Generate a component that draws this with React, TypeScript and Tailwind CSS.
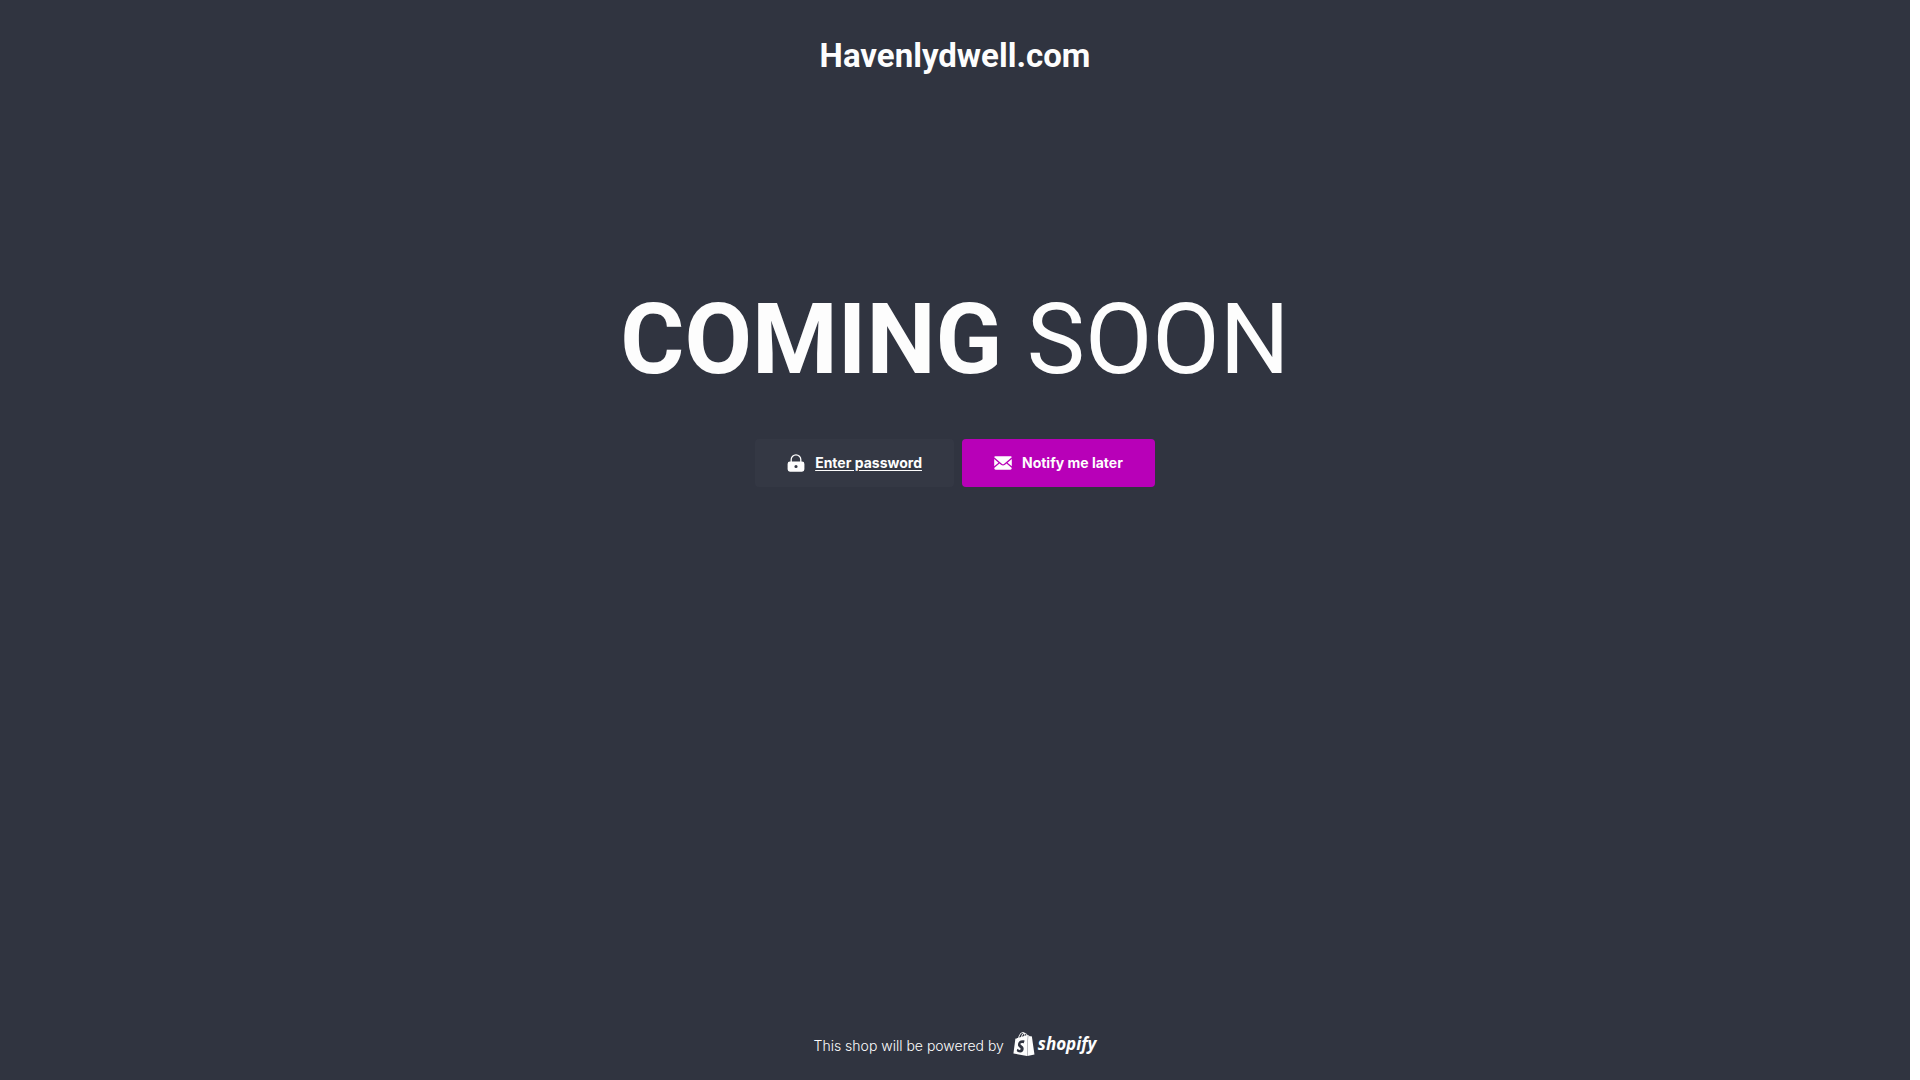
import React from 'react';
import { SiShopify } from 'react-icons/si';

const LockIcon: React.FC = () => (
  <svg viewBox="0 0 18 18" className="w-[18px] h-[18px] shrink-0" aria-hidden="true">
    <path d="M4.2 8V5.6a4.8 4.8 0 0 1 9.6 0V8" fill="none" stroke="currentColor" strokeWidth="1.3" />
    <path
      fill="currentColor"
      fillRule="evenodd"
      d="M3 7.5h12a2.4 2.4 0 0 1 2.4 2.4v5.4a2.4 2.4 0 0 1-2.4 2.4H3a2.4 2.4 0 0 1-2.4-2.4V9.9a2.4 2.4 0 0 1 2.4-2.4zM9 10.9a1.6 1.6 0 1 0 0 3.2a1.6 1.6 0 1 0 0-3.2z"
    />
  </svg>
);

const EnvelopeIcon: React.FC = () => (
  <svg viewBox="0 0 18 18" className="w-[18px] h-[18px] shrink-0" aria-hidden="true">
    <path
      fill="currentColor"
      d="M1.3 2.3h15.4q.9 0 1.1.9L10.2 9.7q-1.2 1-2.4 0L.2 3.2q.2-.9 1.1-.9zM.2 5l4.3 3.7L.2 12.3zM17.8 5v7.3l-4.3-3.6zM5.500 9.500l1.500 1.300q2 1.600 4 0l1.500-1.300 5.300 4.600q-.1 1.600-1.500 1.600H1.700q-1.400 0-1.500-1.600z"
    />
  </svg>
);

const App: React.FC = () => {
  return (
    <div className="min-h-screen flex bg-[#303440] text-[#fdfdfd] font-['Inter',sans-serif]">
      <div className="flex-1 flex flex-col items-center">
        <header className="pt-8">
          <h1 className="font-['Roboto',sans-serif] text-[33px] leading-[48px] font-bold">Havenlydwell.com</h1>
        </header>

        <main className="flex-1 flex flex-col items-center pt-[200px]">
          <h2 className="font-['Roboto',sans-serif] text-[98px] leading-[120px] text-center">
            <strong className="font-bold">COMING</strong> SOON
          </h2>
          <div className="mt-[39px] flex flex-wrap justify-center gap-2">
            <button
              type="button"
              className="h-12 px-8 flex items-center gap-2.5 rounded-sm bg-[#343844] text-sm font-bold underline underline-offset-2"
            >
              <LockIcon />
              Enter password
            </button>
            <button
              type="button"
              className="h-12 px-8 flex items-center gap-2.5 rounded-sm bg-[#b800b8] text-sm font-bold"
            >
              <EnvelopeIcon />
              Notify me later
            </button>
          </div>
        </main>

        <footer className="pb-6 flex items-center gap-2 text-sm">
          <span className="pt-1 font-light">This shop will be powered by</span>
          <a href="#shopify" className="flex items-center gap-0.5">
            <SiShopify className="w-6 h-6" aria-hidden="true" />
            <span className="font-['Open_Sans',sans-serif] text-[17px] leading-6 font-bold italic">shopify</span>
          </a>
        </footer>
      </div>
      <div className="w-2.5 bg-white" />
    </div>
  );
};

export default App;
